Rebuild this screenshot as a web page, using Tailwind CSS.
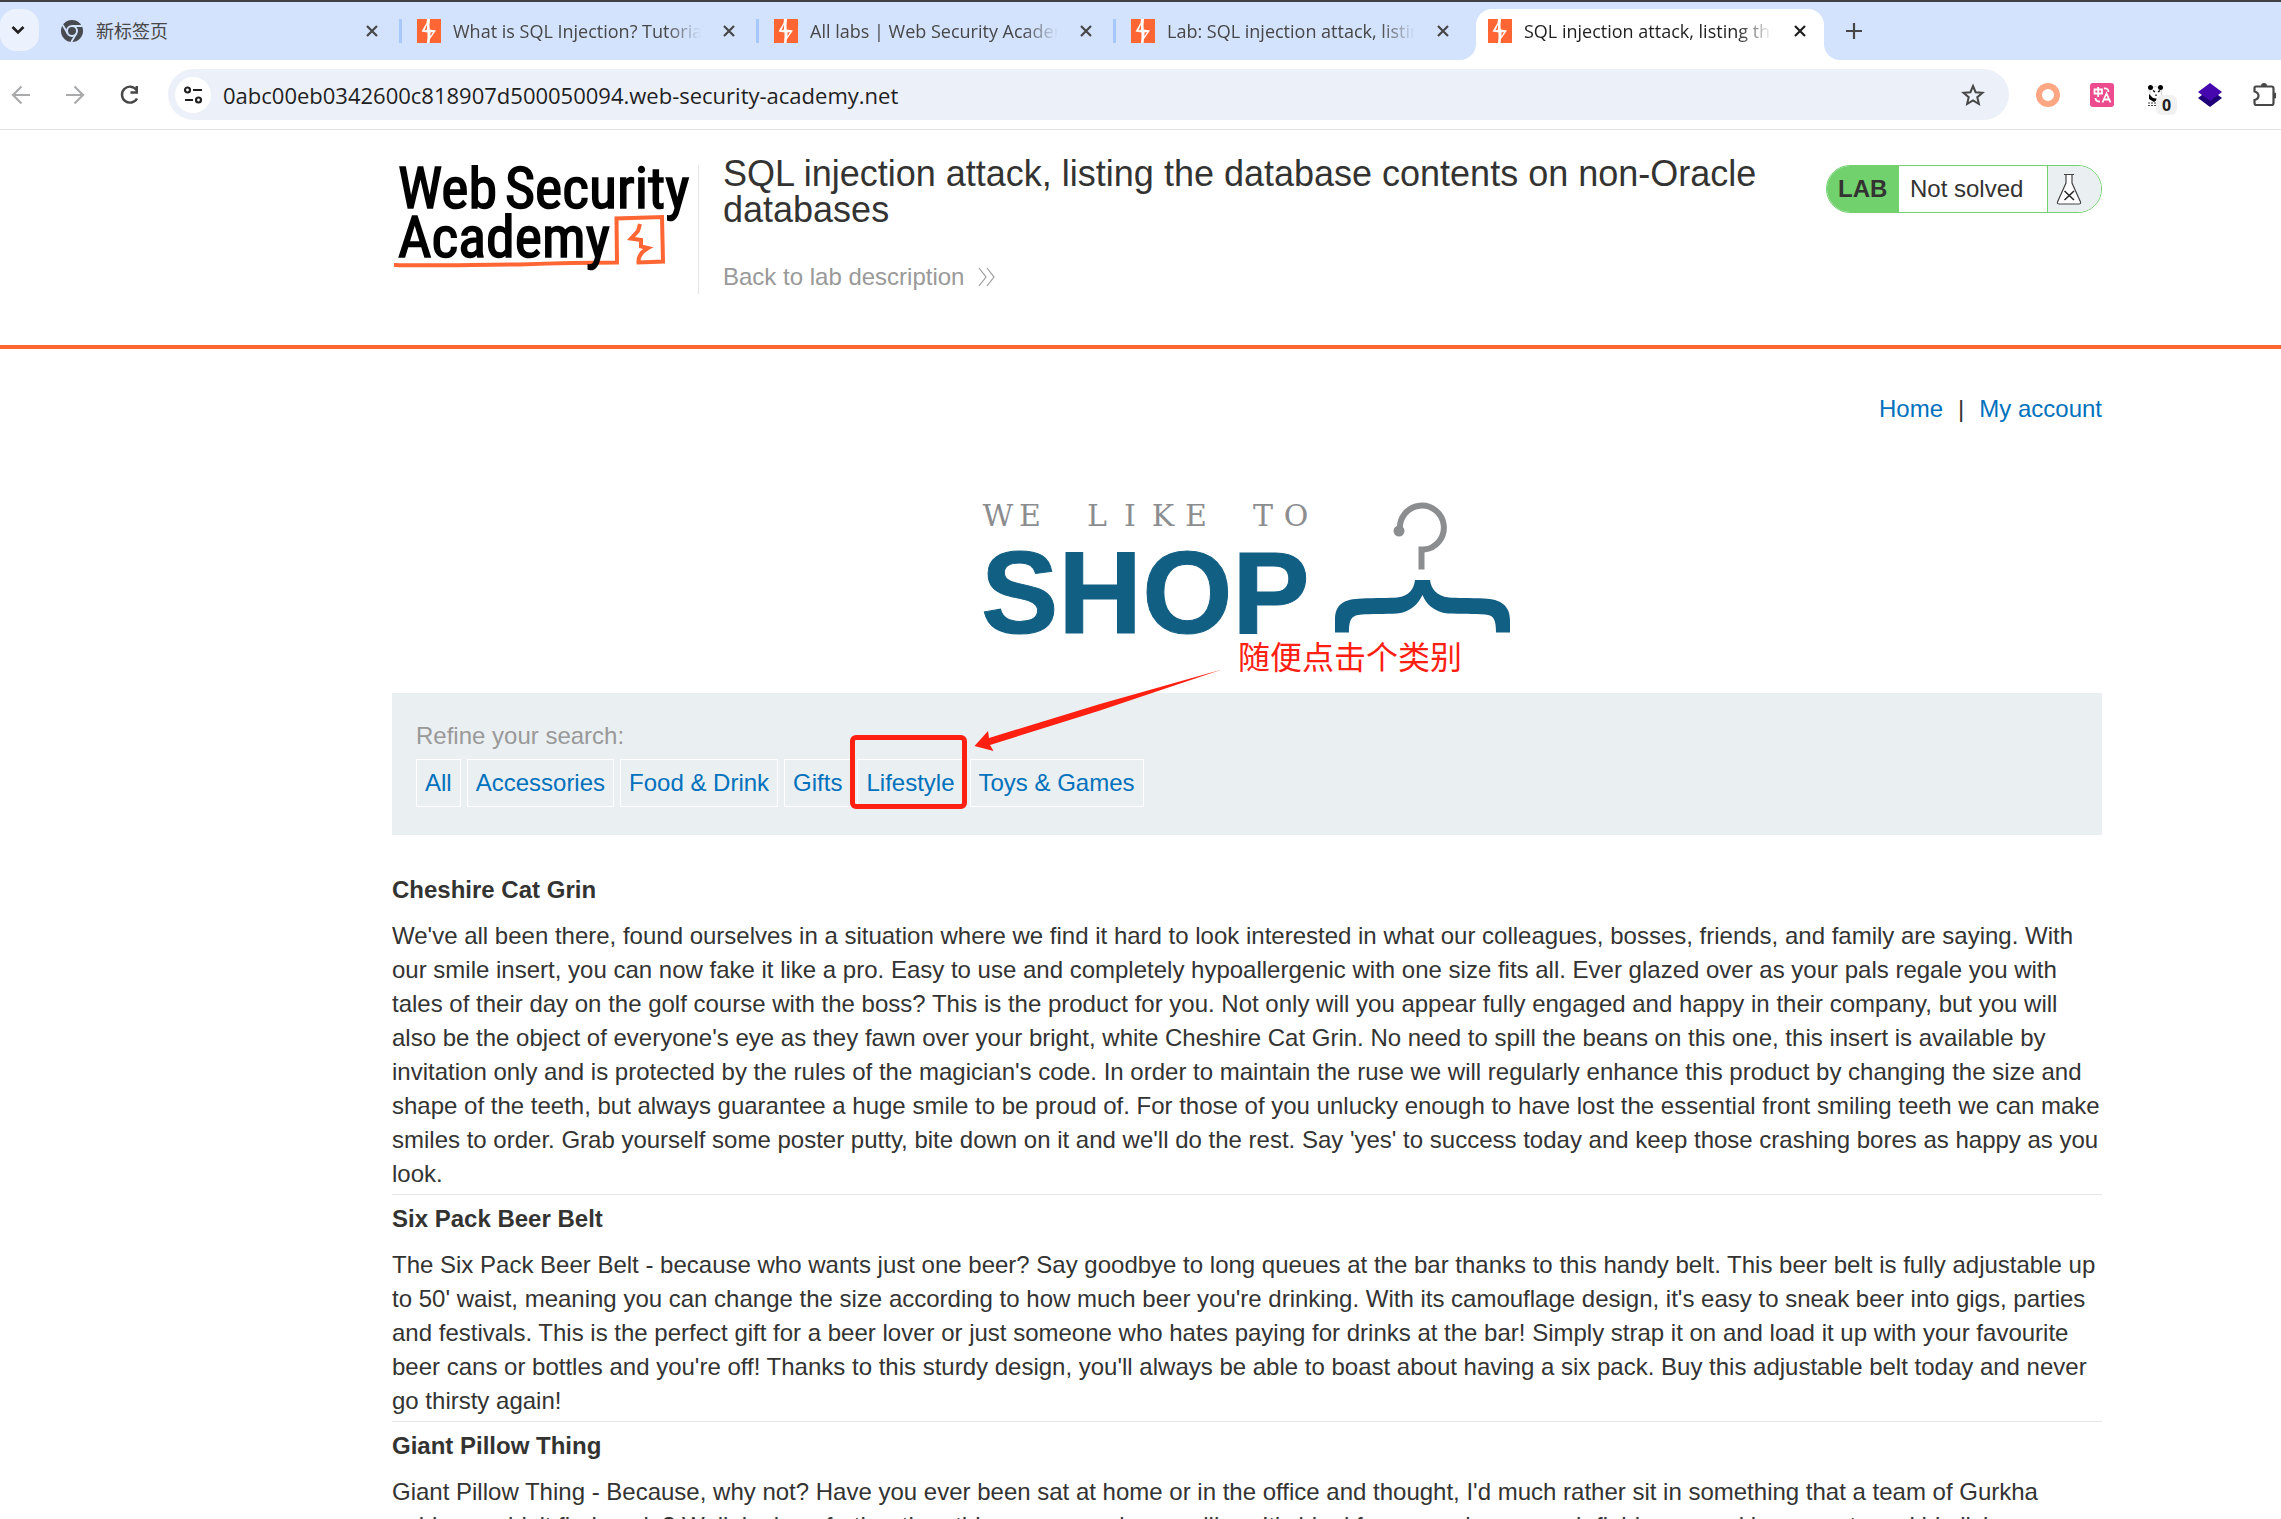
<!DOCTYPE html>
<html lang="en">
<head>
<meta charset="utf-8">
<title>SQL injection attack, listing the database contents on non-Oracle databases</title>
<script src="https://cdn.jsdelivr.net/npm/@tailwindcss/browser@4"></script>
</head>
<body class="flex h-screen flex-col overflow-hidden bg-white font-['Liberation_Sans',Arial,sans-serif] text-[24px] leading-[34px] text-[#333332]">

<svg class="hidden" aria-hidden="true">
  <symbol id="bolt" viewBox="0 0 24 24">
    <rect width="24" height="24" fill="#ff6633"/>
    <path d="M10 0 9.500 4 4.500 12.500 10.500 13.500 10.500 18 10 24H12.500L13 20 19 11.500 12.800 10.500 12.500 6.500 13 0Z" fill="#fff"/>
    <path d="M10 5.500V10.500L7.500 11.500ZM13.500 13.500 16 13 13.500 17.500Z" fill="#ff6633"/>
  </symbol>
  <symbol id="close" viewBox="0 0 14 14">
    <path d="M2 2 12 12M12 2 2 12" stroke="currentColor" stroke-width="2.200" fill="none"/>
  </symbol>
</svg>

<!-- Browser chrome -->
<header class="shrink-0 border-b border-[#dfe0e1] font-['Open_Sans','Noto_Sans_CJK_SC',sans-serif]">
  <div class="flex h-15 border-t-2 border-[#3f4045] bg-[#d3e2fd]">
    <button aria-label="Search tabs" class="mt-[7px] mr-1.5 flex h-[42px] w-[39px] items-center justify-center rounded-2xl bg-[#ebf1fd] pr-1">
      <svg class="size-3.5" viewBox="0 0 14 14" fill="none" stroke="#1f1f1f" stroke-width="2.600"><path d="M1.500 4 7 9.500 12.500 4"/></svg>
    </button>
    <div role="tablist" class="flex text-[18px] leading-6 text-[#474747]">
      <div class="flex w-[357px] items-center pl-[15px]">
        <button role="tab" class="flex flex-1 items-center gap-3 text-left">
          <svg class="size-6" viewBox="0 0 24 24"><circle cx="12" cy="12" r="11" fill="#474a4f"/><circle cx="12" cy="12" r="5" fill="none" stroke="#d3e2fd" stroke-width="2"/><path d="M12 7H22M7.700 14.500 2.700 6M16.300 14.500 11.300 23" stroke="#d3e2fd" stroke-width="1.800"/></svg>
          <span class="w-[248px] overflow-hidden whitespace-nowrap">新标签页</span>
        </button>
        <button aria-label="Close tab" class="mr-5"><svg class="size-3.5"><use href="#close"/></svg></button>
        <span class="h-6 w-[3px] bg-[#a8c7fa]"></span>
      </div>
      <div class="flex w-[357px] items-center pl-[15px]">
        <button role="tab" class="flex flex-1 items-center gap-3 text-left">
          <svg class="size-6"><use href="#bolt"/></svg>
          <span class="w-[248px] overflow-hidden whitespace-nowrap [mask-image:linear-gradient(to_right,black_86%,transparent)]">What is SQL Injection? Tutorial</span>
        </button>
        <button aria-label="Close tab" class="mr-5"><svg class="size-3.5"><use href="#close"/></svg></button>
        <span class="h-6 w-[3px] bg-[#a8c7fa]"></span>
      </div>
      <div class="flex w-[357px] items-center pl-[15px]">
        <button role="tab" class="flex flex-1 items-center gap-3 text-left">
          <svg class="size-6"><use href="#bolt"/></svg>
          <span class="w-[248px] overflow-hidden whitespace-nowrap [mask-image:linear-gradient(to_right,black_86%,transparent)]">All labs | Web Security Academy</span>
        </button>
        <button aria-label="Close tab" class="mr-5"><svg class="size-3.5"><use href="#close"/></svg></button>
        <span class="h-6 w-[3px] bg-[#a8c7fa]"></span>
      </div>
      <div class="flex w-[357px] items-center pl-[15px]">
        <button role="tab" class="flex flex-1 items-center gap-3 text-left">
          <svg class="size-6"><use href="#bolt"/></svg>
          <span class="w-[248px] overflow-hidden whitespace-nowrap [mask-image:linear-gradient(to_right,black_86%,transparent)]">Lab: SQL injection attack, listing</span>
        </button>
        <button aria-label="Close tab" class="mr-[23px]"><svg class="size-3.5"><use href="#close"/></svg></button>
      </div>
      <div class="relative mt-[7px] ml-[3px] flex w-[348px] items-center rounded-t-2xl bg-white pb-[7px] pl-3 text-[#1f1f1f]">
        <svg class="absolute bottom-0 -left-4 size-4" viewBox="0 0 16 16"><path d="M16 0V16H0A16 16 0 0 0 16 0Z" fill="#fff"/></svg>
        <svg class="absolute -right-4 bottom-0 size-4" viewBox="0 0 16 16"><path d="M0 0V16H16A16 16 0 0 1 0 0Z" fill="#fff"/></svg>
        <button role="tab" aria-selected="true" class="flex flex-1 items-center gap-3 text-left">
          <svg class="size-6"><use href="#bolt"/></svg>
          <span class="w-[248px] overflow-hidden whitespace-nowrap [mask-image:linear-gradient(to_right,black_86%,transparent)]">SQL injection attack, listing the</span>
        </button>
        <button aria-label="Close tab" class="mr-[17px]"><svg class="size-3.5"><use href="#close"/></svg></button>
      </div>
    </div>
    <button aria-label="New tab" class="ml-[22px]">
      <svg class="size-4" viewBox="0 0 16 16" stroke="#474747" stroke-width="2.200"><path d="M8 0V16M0 8H16"/></svg>
    </button>
  </div>

  <div class="flex h-[69px] items-center pr-[5px] pl-2.5">
    <button aria-label="Back" class="mr-[30px]"><svg class="size-6" viewBox="0 0 24 24" fill="none" stroke="#a9aaab" stroke-width="2.200"><path d="M20 12H3.500M11.500 3.500 3 12l8.500 8.500"/></svg></button>
    <button aria-label="Forward" class="mr-[30px]"><svg class="size-6" viewBox="0 0 24 24" fill="none" stroke="#a9aaab" stroke-width="2.200"><path d="M2 12H18.500M10.500 3.500 19 12l-8.500 8.500"/></svg></button>
    <button aria-label="Reload" class="mr-[26px]"><svg class="size-6" viewBox="0 0 24 24" fill="none" stroke="#474747" stroke-width="2.400"><path d="M18.500 7A8 8 0 1 0 19 15.500"/><path d="M18.800 3V9.500H12.500"/></svg></button>
    <div class="flex h-[51px] flex-1 items-center rounded-full bg-[#ecf0f9] pr-[24px] pl-[7px]">
      <button aria-label="View site information" class="mr-3 flex size-9 items-center justify-center rounded-full bg-white">
        <svg class="size-5" viewBox="0 0 20 20" fill="none" stroke="#1f1f1f" stroke-width="2.200"><circle cx="4.500" cy="5" r="2.500"/><path d="M10 5H19M2 15H10"/><circle cx="15.500" cy="15" r="2.500"/></svg>
      </button>
      <input aria-label="Address" value="0abc00eb0342600c818907d500050094.web-security-academy.net" class="min-w-0 flex-1 bg-transparent text-[22px] leading-8 text-[#1f1f1f] outline-none">
      <button aria-label="Bookmark this tab"><svg class="size-6" viewBox="0 0 24 24" fill="none" stroke="#474747" stroke-width="2"><path d="M12 3 14.600 9.200 21.500 9.800 16.300 14.200 17.900 21 12 17.400 6.100 21 7.700 14.200 2.500 9.800 9.400 9.200Z"/></svg></button>
    </div>
    <div class="ml-[27px] flex shrink-0 gap-[30px]">
      <button aria-label="Proxy extension"><svg class="size-6" viewBox="0 0 24 24"><circle cx="12" cy="12" r="9" fill="#fff" stroke="#ffa783" stroke-width="6"/></svg></button>
      <button aria-label="Translate extension"><svg class="size-6" viewBox="0 0 24 24" fill="none" stroke="#fff" stroke-width="1.800"><rect width="24" height="24" rx="3" fill="#ec4c8d" stroke="none"/><path d="M4.500 6.500H12V10.500H4.500ZM8.200 4V14M14 5.500Q18.500 5 18.500 9M5.500 15Q5.500 18.800 10 18.500M12.500 19.500 16.500 10.500 20.500 19.500M14 16.500H19"/></svg></button>
      <button aria-label="Panda extension" class="relative">
        <svg class="size-6" viewBox="0 0 24 24"><path d="M6 7Q11 0 17 7L18 14Q12 18 6 14Z" fill="#fff" stroke="#999" stroke-width=".5"/><circle cx="6.500" cy="4.500" r="2.500"/><circle cx="16.500" cy="4.500" r="2.500"/><path d="M9 7.500 11 9M14 9 16 7.500M12 11.500V13" stroke="#000" stroke-width="1.300"/><path d="M5 11 9 15 14 16 10 19 5 16Z"/><path d="M4 20H12M4 22.500H14" stroke="#444" stroke-width="1.200" stroke-dasharray="2 1"/></svg>
        <span class="absolute top-3 left-3 flex h-5 w-[21px] items-center justify-center rounded-md bg-[#f1f1f1] text-[16px] leading-5 font-bold text-[#1f1f1f]">0</span>
      </button>
      <button aria-label="Layers extension"><svg class="size-6" viewBox="0 0 24 24"><path d="M12 6 24 15 12 24 0 15Z" fill="#1f0078"/><path d="M12 0 24 9 12 18 0 9Z" fill="#4607ae"/></svg></button>
      <button aria-label="Extensions"><svg class="size-6" viewBox="0 0 24 24" fill="none" stroke="#474747" stroke-width="2.200"><path d="M4 3.500H19.500Q21.500 3.500 21.500 5.500V20Q21.500 22 19.500 22H4.500Q2.500 22 2.500 20V17Q6.500 16 6.500 12.700 6.500 9.500 2.500 8.500V5Q2.500 3.500 4 3.500Z"/><path d="M9 3A3 3 0 0 1 15 3ZM22 9.500A3 3 0 0 1 22 15.500Z" fill="#474747" stroke="none"/></svg></button>
    </div>
  </div>
</header>

<div class="min-h-0 flex-1 overflow-hidden">
  <!-- Lab banner -->
  <section class="flex items-start border-b-4 border-[#ff6633] pt-[21px] pr-[179px] pb-[51px] pl-98">
    <a href="#" aria-label="Web Security Academy" class="mt-[14px] flex h-[129px] w-[307px] shrink-0 border-r border-[#e5e5e5]">
      <svg class="h-[110px] w-[306px]" viewBox="392 165 306 110" font-family="'Liberation Sans Narrow','Roboto Condensed','Roboto',sans-serif" font-size="58" fill="#000" stroke="#000" stroke-width="1.500">
        <path d="M394 265C430 266 480 264.500 520 264.500 560 263 590 262.500 617 262.500L616.500 218.500 662 217 663 261.500 638.500 262.500C638 256 641 252 648 248L641 246.500 641 240 631 238.500 638 231 640 224" fill="none" stroke="#ff6633" stroke-width="4"/>
        <text x="398" y="208">Web</text><text x="505" y="208">Security</text>
        <text x="398" y="257">Academy</text>
      </svg>
    </a>
    <div class="ml-6 flex-1 pt-[5px]">
      <h2 class="text-[36px] leading-9">SQL injection attack, listing the database contents on non-Oracle databases</h2>
      <a href="#" class="mt-8 flex items-center gap-[14px] text-[#999]">Back to lab description
        <svg class="h-5 w-[17px]" viewBox="0 0 17 20" fill="none" stroke="#999" stroke-width="1.200"><path d="M1 1 8 10 1 19M9 1 16 10 9 19"/></svg>
      </a>
    </div>
    <div class="mt-[14px] ml-6 flex h-12 w-[276px] shrink-0 items-stretch overflow-hidden rounded-[24px] border border-[#70d16d] leading-[46px]">
      <span class="w-[72px] bg-[#70d16d] pl-[11px] font-bold">LAB</span>
      <span class="flex-1 border-r border-[#70d16d] pl-[11px]">Not solved</span>
      <span class="flex w-[53px] items-center bg-[#eaeff2] pl-2">
        <svg class="h-8 w-[26px]" viewBox="0 0 26 32" fill="#fff" stroke="#444" stroke-width="1.200"><path d="M8 1.500H18M10 1.500V10L1.500 29Q1 31 3 31H23Q25 31 24.500 29L16 10V1.500"/><path d="M8.500 18 18 27M18 18 8.500 27" stroke="#222" stroke-width="1.500"/></svg>
      </span>
    </div>
  </section>

  <main class="pr-[179px] pl-98">
    <nav class="flex justify-end gap-[15px] pt-[43px]">
      <a href="#" class="text-[#0071bc]">Home</a><span>|</span><a href="#" class="text-[#0071bc]">My account</a>
    </nav>

    <!-- Shop logo -->
    <svg class="mx-auto mt-[74px] h-35 w-[534px]" viewBox="980 500 534 140" role="img" aria-label="We like to shop">
      <text x="998 1030 1063 1097 1130 1163 1196 1229 1263 1296" y="526" text-anchor="middle" font-family="'DejaVu Serif',serif" font-size="30" fill="#8c8d8f">WE LIKE TO</text>
      <text x="981" y="633" font-family="'Liberation Sans',Arial,sans-serif" font-weight="bold" font-size="116" fill="#125f84" stroke="#125f84" stroke-width="1">SHOP</text>
      <circle cx="1399" cy="531" r="5.500" fill="#8c8d8f"/>
      <path d="M1400 530A22 22 0 1 1 1424 549.500H1421.500V569.500" fill="none" stroke="#8c8d8f" stroke-width="6"/>
      <path d="M1335 632.500V620C1335 604 1344 599 1362 598.500 1375 598 1390 598 1397 597.500 1410 596 1414 588 1415 580H1430C1431 588 1436 596 1449 597.500 1456 598 1470 598 1484 598.500 1501 599 1510 606 1510 620V632.500H1496C1496 620 1494 615 1485 614.500 1475 614 1460 614 1448 613.500 1434 612 1426 604 1422.500 595 1418 604 1411 612 1397 613.500 1385 614 1370 614 1362 614.500 1351 615 1349 620 1349 632.500Z" fill="#125f84"/>
    </svg>

    <!-- Category filter -->
    <section class="relative mt-[53px] bg-[#eaeff2] px-6 pt-[26px] pb-7">
      <p class="text-[#999]">Refine your search:</p>
      <div class="mt-1.5 flex gap-[6px] leading-[46px] text-[#0071bc]">
        <a href="#" class="border border-white px-2">All</a>
        <a href="#" class="border border-white px-2">Accessories</a>
        <a href="#" class="border border-white px-2">Food &amp; Drink</a>
        <a href="#" class="border border-white px-2">Gifts</a>
        <a href="#" class="relative border border-white px-2">Lifestyle<span class="absolute -top-[25px] -right-1 -bottom-[3px] -left-2 rounded-md border-[5px] border-[#ff2012]"></span></a>
        <a href="#" class="border border-white px-2">Toys &amp; Games</a>
      </div>
      <svg class="absolute -top-[25px] left-[582px] h-[86px] w-[250px]" viewBox="974 668 250 86"><path d="M974.500 746 988 731 989 738 1100 704 1222 669.500 1100 710.500 990 745 993.500 751Z" fill="#ff2012"/></svg>
      <p class="absolute -top-14 left-[846px] font-['Noto_Sans_CJK_SC',sans-serif] text-[32px] leading-9 text-[#ff2012]">随便点击个类别</p>
    </section>

    <!-- Products -->
    <div class="mt-[31px] divide-y divide-[#e5e5e5]">
      <article class="pt-[7px] pb-[3px]">
        <h3 class="font-bold">Cheshire Cat Grin</h3>
        <p class="mt-3">We've all been there, found ourselves in a situation where we find it hard to look interested in what our colleagues, bosses, friends, and family are saying. With our smile insert, you can now fake it like a pro. Easy to use and completely hypoallergenic with one size fits all. Ever glazed over as your pals regale you with tales of their day on the golf course with the boss? This is the product for you. Not only will you appear fully engaged and happy in their company, but you will also be the object of everyone's eye as they fawn over your bright, white Cheshire Cat Grin. No need to spill the beans on this one, this insert is available by invitation only and is protected by the rules of the magician's code. In order to maintain the ruse we will regularly enhance this product by changing the size and shape of the teeth, but always guarantee a huge smile to be proud of. For those of you unlucky enough to have lost the essential front smiling teeth we can make smiles to order. Grab yourself some poster putty, bite down on it and we'll do the rest. Say 'yes' to success today and keep those crashing bores as happy as you look.</p>
      </article>
      <article class="pt-[7px] pb-[3px]">
        <h3 class="font-bold">Six Pack Beer Belt</h3>
        <p class="mt-3">The Six Pack Beer Belt - because who wants just one beer? Say goodbye to long queues at the bar thanks to this handy belt. This beer belt is fully adjustable up to 50' waist, meaning you can change the size according to how much beer you're drinking. With its camouflage design, it's easy to sneak beer into gigs, parties and festivals. This is the perfect gift for a beer lover or just someone who hates paying for drinks at the bar! Simply strap it on and load it up with your favourite beer cans or bottles and you're off! Thanks to this sturdy design, you'll always be able to boast about having a six pack. Buy this adjustable belt today and never go thirsty again!</p>
      </article>
      <article class="pt-[7px] pb-[3px]">
        <h3 class="font-bold">Giant Pillow Thing</h3>
        <p class="mt-3">Giant Pillow Thing - Because, why not? Have you ever been sat at home or in the office and thought, I'd much rather sit in something that a team of Gurkha guides couldn't find me in? Well, look no further than this enormous, luxury pillow. It's ideal for car parks, open air fields, unused basements and big living rooms. Simply drag it in with your team of weight lifters and hide from your loved ones for days. This is the perfect product to lounge in comfort in front of the TV on, have a family reunion in, or land on after jumping out of a plane.</p>
      </article>
    </div>
  </main>
</div>
</body>
</html>
